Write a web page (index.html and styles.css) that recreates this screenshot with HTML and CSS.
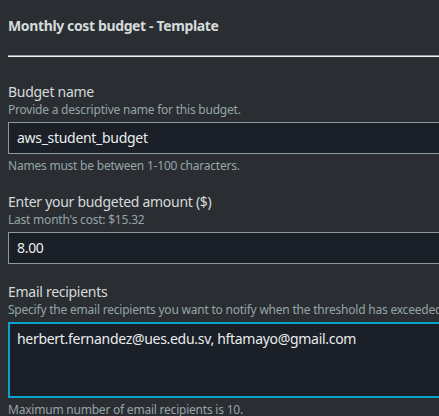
FILE: index.html
```html
<!DOCTYPE html>
<html>
<head>
<meta charset="utf-8">
<link rel="stylesheet" href="styles.css">
</head>
<body>
<div class="page">
  <div class="header">
    <h2 class="title">Monthly cost budget - Template</h2>
  </div>
  <div class="rule"></div>
  <div class="form">
    <div class="field">
      <div class="label">Budget name</div>
      <div class="desc">Provide a descriptive name for this budget.</div>
      <div class="input">aws_student_budget</div>
      <div class="hint">Names must be between 1-100 characters.</div>
    </div>
    <div class="field">
      <div class="label">Enter your budgeted amount ($)</div>
      <div class="desc">Last month's cost: $15.32</div>
      <div class="input">8.00</div>
    </div>
    <div class="field field-last">
      <div class="label">Email recipients</div>
      <div class="desc">Specify the email recipients you want to notify when the threshold has exceeded.</div>
      <div class="textarea">herbert.fernandez@ues.edu.sv, hftamayo@gmail.com</div>
      <div class="hint">Maximum number of email recipients is 10.</div>
    </div>
  </div>
</div>
</body>
</html>
```

FILE: styles.css
```css
html, body {
  margin: 0;
  padding: 0;
  background: #2a2e33;
  overflow: hidden;
}
body {
  font-family: "Noto Sans", "Open Sans", sans-serif;
  color: #d5dbdb;
}
.page {
  width: 640px;
  padding-left: 8px;
}
.header {
  padding-top: 16px;
}
.title {
  margin: 0;
  font-size: 14px;
  line-height: 20px;
  font-weight: 700;
  letter-spacing: -0.37px;
  color: #d5dbdb;
}
.rule {
  margin-top: 19px;
  height: 0;
  border-top: 1px solid #9aa0a5;
  border-bottom: 1px solid #eef0f1;
}
.form {
  padding-top: 25px;
}
.field {
  margin-bottom: 18px;
}
.field-last {
  margin-top: 1px;
}
.label {
  font-size: 14px;
  line-height: 20px;
  letter-spacing: -0.28px;
  color: #d5dbdb;
}
.desc {
  font-size: 12px;
  line-height: 16px;
  letter-spacing: -0.22px;
  color: #95a5a6;
  white-space: nowrap;
}
.input {
  margin-top: 4px;
  height: 30px;
  box-sizing: content-box;
  border: 1px solid #8b9b9e;
  background: #1a1f28;
  padding: 0 8px;
  font-size: 14px;
  line-height: 30px;
  letter-spacing: -0.3px;
  color: #eaeded;
}
.textarea {
  margin-top: 4px;
  height: 63px;
  border: 2px solid #0aa3cb;
  background: #1a1f28;
  padding: 5px 7px 4px;
  box-sizing: content-box;
  font-size: 14px;
  line-height: 20px;
  letter-spacing: -0.3px;
  color: #eaeded;
  white-space: nowrap;
}
.hint {
  margin-top: 4px;
  font-size: 12px;
  line-height: 16px;
  letter-spacing: -0.22px;
  color: #95a5a6;
}
```
